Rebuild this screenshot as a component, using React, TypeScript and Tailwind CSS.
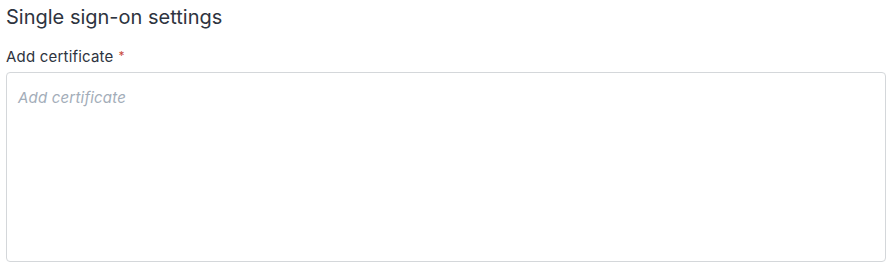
import React, { useState } from "react";

const App: React.FC = () => {
  const [certificate, setCertificate] = useState<string>("");

  return (
    <div className="w-[893px] h-[268px] bg-white px-[6px] pt-[3px] font-['Inter',sans-serif]">
      {/* Section title */}
      <h2 className="text-[20px] leading-[28px] text-[#2e3440] font-normal">
        Single sign-on settings
      </h2>
      {/* Certificate field */}
      <label className="mt-[16px] flex items-start text-[15px] leading-[20px] tracking-[0.2px] text-[#2e3440]">
        Add certificate
        <span className="ml-[5px] text-[12px] leading-[18px] text-[#c84a3c]">*</span>
      </label>
      <textarea
        value={certificate}
        placeholder="Add certificate"
        onChange={(e) => setCertificate(e.target.value)}
        className="mt-[5px] block w-[880px] h-[190px] resize-none rounded-[4px] border border-[#d4d7da] bg-white px-[11px] py-[15px] text-[15px] leading-[20px] tracking-[0.2px] text-[#2e3440] outline-none placeholder:italic placeholder:text-[#a3adb9]"
      ></textarea>
    </div>
  );
};

export default App;
